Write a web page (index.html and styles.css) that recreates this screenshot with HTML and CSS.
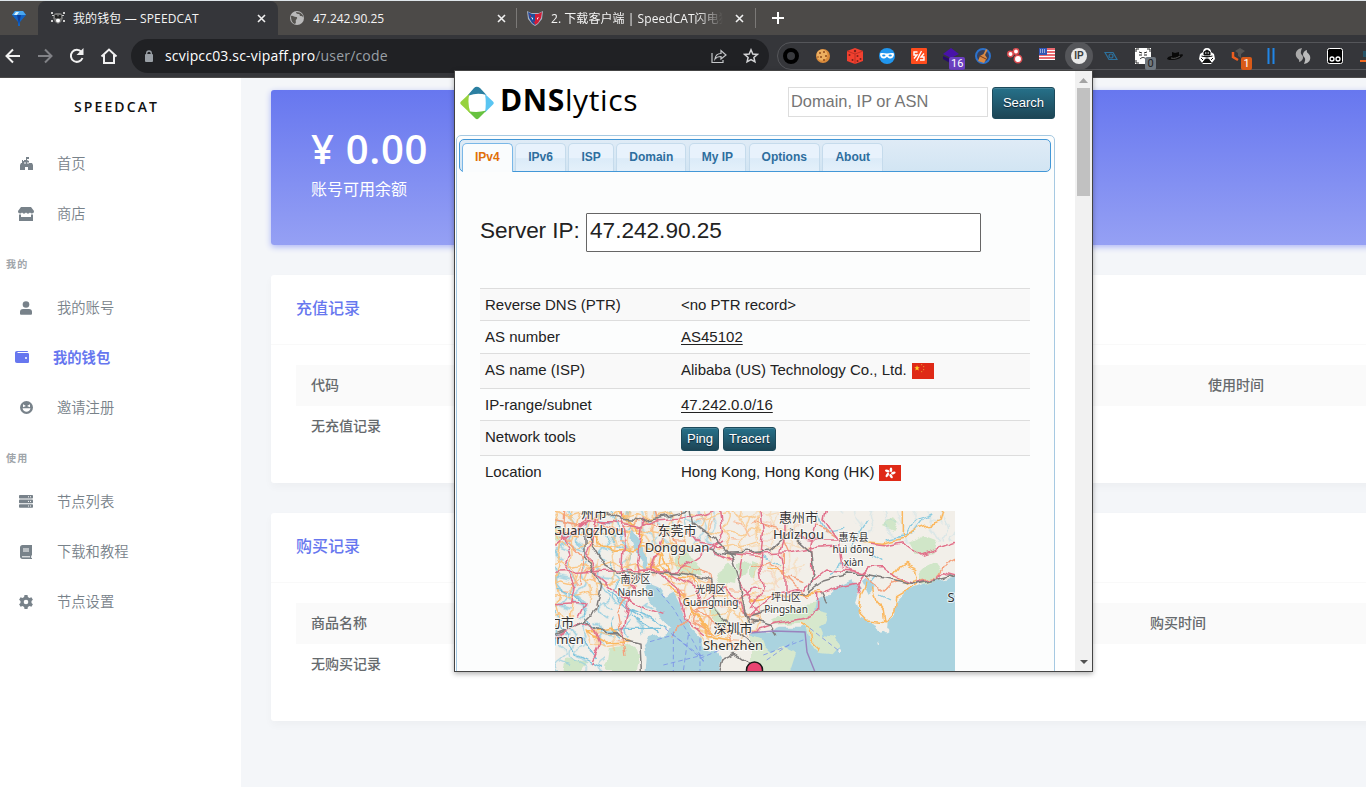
FILE: index.html
```html
<!DOCTYPE html>
<html lang="zh-CN">
<head>
<meta charset="utf-8">
<title>我的钱包 — SPEEDCAT</title>
<link rel="stylesheet" href="styles.css">
</head>
<body>
<div class="window">
  <header class="chrome">
    <div class="tabstrip">
      <div class="pinned"><svg width="14" height="16" viewBox="0 0 14 16"><path d="M3 1h8l3 4-6 7v4H6v-4L0 5z" fill="#1263c4"/><path d="M3 1h8l3 4H0z" fill="#49a6ef"/><path d="M4 2h3L5 5H2z" fill="#d9f3ff"/><path d="M5 5h4l-2 9z" fill="#0d3e9a"/></svg></div>
      <div class="tab tab-active">
        <svg width="16" height="16" viewBox="0 0 16 16"><path d="M4 4l2-1h4l2 1 1 4-2 4-3 2-3-2-2-4z" fill="#777"/><path d="M5 5h2l1 2 1-2h2v3l-3 1-3-1z" fill="#222"/><g fill="#ccc"><rect x="1" y="2" width="2" height="2"/><rect x="13" y="2" width="2" height="2"/><rect x="1" y="10" width="2" height="2"/><rect x="13" y="10" width="2" height="2"/><rect x="2" y="5" width="2" height="1"/><rect x="12" y="5" width="2" height="1"/><circle cx="8" cy="10.500" r="2" fill="#fff"/></g></svg>
        <span class="tab-title">我的钱包 — SPEEDCAT</span>
        <svg class="close" width="9" height="9" viewBox="0 0 9 9"><path d="M1 1l7 7M8 1L1 8"/></svg>
      </div>
      <div class="tab tab-ip">
        <svg width="14" height="14" viewBox="0 0 14 14"><circle cx="7" cy="7" r="7" fill="#b9b9b9"/><path d="M1 5c2-1 3 1 5 1s1 2 0 3 1 2-1 4C2 12 1 9 1 5zM6 1c0 2 2 2 3 2s0 2 2 2 2 1 2 2c1-3-2-6-7-6z" fill="#55534f"/></svg>
        <span class="tab-title">47.242.90.25</span>
        <svg class="close" width="9" height="9" viewBox="0 0 9 9"><path d="M1 1l7 7M8 1L1 8"/></svg>
      </div>
      <div class="tab tab-dl">
        <svg width="16" height="15" viewBox="0 0 16 15"><path d="M0 0l4 2h8l4-2-1 8-4 5-3 2-3-2-4-5z" fill="#aab2c4"/><path d="M1 1l4 2h3v11l-3-2-3-5z" fill="#204d9c"/><path d="M15 1l-4 2H8v11l3-2 3-5z" fill="#d31c36"/><path d="M4 6l2 1v2zM12 6l-2 1v2z" fill="#fff"/><path d="M2 3l2 2v2zM6 10l2 1v2z" fill="#d31c36"/></svg>
        <span class="tab-title fade">2. 下载客户端 | SpeedCAT闪电猫</span>
        <svg class="close" width="9" height="9" viewBox="0 0 9 9"><path d="M1 1l7 7M8 1L1 8"/></svg>
      </div>
      <svg class="newtab" width="12" height="12" viewBox="0 0 12 12"><path d="M6 0v12M0 6h12" stroke="#fff" stroke-width="2"/></svg>
    </div>
    <div class="toolbar">
      <nav class="nav">
        <svg width="16" height="16" viewBox="0 0 16 16" stroke="#f1f1f1"><path d="M15 8H2M8 1.5L1.5 8 8 14.5"/></svg>
        <svg width="16" height="16" viewBox="0 0 16 16" stroke="#818286"><path d="M1 8h13M8 1.500L14.500 8 8 14.500"/></svg>
        <svg width="16" height="16" viewBox="0 0 16 16" stroke="#f1f1f1"><path d="M13.500 10A6 6 0 1 1 12.500 4"/><path d="M14.500 0v7h-7z" fill="#f1f1f1" stroke="none"/></svg>
        <svg width="16" height="16" viewBox="1 0 16 16" stroke="#f1f1f1"><path d="M1.500 8.500L9 1.500l7.500 7M4 7v8h10V7"/></svg>
      </nav>
      <div class="omnibox">
        <svg width="10" height="13" viewBox="0 0 10 13"><rect x="1" y="4" width="8" height="8" rx="1" fill="#9aa0a6"/><path d="M2.700 5V3.300a2.300 2.300 0 0 1 4.600 0V5" fill="none" stroke="#9aa0a6" stroke-width="1.300"/></svg>
        <span class="url"><b>scvipcc03.sc-vipaff.pro</b>/user/code</span>
        <svg class="share" width="16" height="16" viewBox="0 0 16 16" fill="none" stroke="#c4c6c9" stroke-width="1.200"><path d="M1 5v9.500h11V12"/><path d="M4 11c.5-4 3-5.500 6-5.500V2.500L15 7l-5 4V8.500c-3 0-4.500.5-6 2.500z"/></svg>
        <svg width="16" height="16" viewBox="0 0 16 16" fill="none" stroke="#d3d4d6" stroke-width="1.500"><path d="M8 1.800l1.800 4.200 4.500.4-3.400 3 1 4.400L8 11.500l-3.900 2.300 1-4.400-3.400-3 4.500-.4z"/></svg>
      </div>
      <div class="exts">
        <span class="ext"><svg width="16" height="16" viewBox="0 0 16 16"><circle cx="8" cy="8" r="6" fill="#393a3e" stroke="#000" stroke-width="4"/></svg></span>
        <span class="ext"><svg width="16" height="16" viewBox="0 0 16 16"><circle cx="8" cy="8" r="7" fill="#d98a3a"/><circle cx="7" cy="7" r="5.500" fill="#edaf60"/><g fill="#8f4a1a"><circle cx="5" cy="5" r="1"/><circle cx="9" cy="4" r="1"/><circle cx="11" cy="8" r="1"/><circle cx="6" cy="9" r="1"/><circle cx="9" cy="12" r="1"/><circle cx="3" cy="9" r=".8"/></g></svg></span>
        <span class="ext"><svg width="16" height="16" viewBox="0 0 16 16"><path d="M8 0l8 3v10l-8 3-8-3V3z" fill="#f2402f"/><path d="M0 3l8 3 8-3M8 6v10" stroke="#a92a21" stroke-width=".7" fill="none"/><g fill="#7b211b"><circle cx="8" cy="3" r="1.200"/><circle cx="2.500" cy="7" r="1"/><circle cx="5.500" cy="12" r="1"/><circle cx="10.500" cy="8" r="1"/><circle cx="13.500" cy="11" r="1"/><circle cx="10.500" cy="13" r="1"/></g></svg></span>
        <span class="ext"><svg width="16" height="16" viewBox="0 0 16 16"><circle cx="8" cy="8" r="8" fill="#2196ee"/><path d="M1 5.500c3-1 5 0 7 0s4-1 7 0c0 4-2 5-4 5-2 0-2-1.500-3-1.500S7 10.500 5 10.500c-2 0-4-1-4-5z" fill="#fff"/><ellipse cx="4.800" cy="7.600" rx="1.700" ry="1" fill="#2196ee"/><ellipse cx="11.200" cy="7.600" rx="1.700" ry="1" fill="#2196ee"/></svg></span>
        <span class="ext"><svg width="16" height="16" viewBox="0 0 16 16"><rect width="16" height="16" rx="1" fill="#ff4c1d"/><path d="M6.500 4H3v3h3L3 10.500M10.500 3L5.500 13M9 12h4V9h-3l3-3.500" stroke="#fff" stroke-width="1.400" fill="none"/></svg></span>
        <span class="ext"><svg width="17" height="16" viewBox="0 0 17 16"><path d="M8 0l8 6-8 4-8-4z" fill="#4812a8"/><path d="M0 8l7 3v4l-7-4z" fill="#270a6c"/></svg><i class="badge violet">16</i></span>
        <span class="ext"><svg width="16" height="16" viewBox="0 0 16 16"><circle cx="8" cy="8" r="7" fill="#39405a" stroke="#2c72cc" stroke-width="2"/><path d="M11 1L8.500 6 5 8l-2 5 6 2 3-5-2-3 2.500-5z" fill="#dc8a43"/><path d="M5 8l6 3" stroke="#7a3b1c"/></svg></span>
        <span class="ext"><svg width="16" height="16" viewBox="0 0 16 16"><g fill="#fff" stroke="#dc4c50" stroke-width="1.500"><circle cx="3.500" cy="6" r="2.700"/><circle cx="9" cy="3.500" r="2.700"/><circle cx="11" cy="11" r="3.700"/></g></svg></span>
        <span class="ext flag-ext"><svg width="16" height="12" viewBox="0 0 16 12"><rect width="16" height="12" fill="#fff"/><path d="M0 1h16M0 4h16M0 7h16M0 10h16" stroke="#e23a42" stroke-width="1.500"/><rect width="8" height="7" fill="#3156b5"/><path d="M1 2h6M1 4h6" stroke="#fff" stroke-dasharray="1 1"/></svg></span>
        <span class="ext ip-on"><span class="ip">IP</span></span>
        <span class="ext"><svg width="14" height="12" viewBox="0 0 14 12" fill="none" stroke="#2d719d" stroke-width="1.200"><path d="M1 2.500h8l4 7H5zM1 2.500L3 6l2 3.500"/><circle cx="7" cy="6" r="2"/></svg></span>
        <span class="ext"><svg width="16" height="16" viewBox="0 0 16 16"><rect width="16" height="16" fill="#fff"/><path d="M1 4V1h3M12 1h3v3M1 12v3h3M4 4l3 1M12 4L9 5M4 7h3M9 7h3M5 11c2-2 4-2 6 0" stroke="#222" stroke-width="1" fill="none"/></svg><i class="badge gray">0</i></span>
        <span class="ext"><svg width="17" height="12" viewBox="0 0 17 12"><path d="M0 9c1-3 4-3 5-3l6-1c3-1 5-1 5 0s-4 5-10 5c-3 0-5 0-6-1z" fill="#0b0b0b"/><path d="M5 7V2l3 1 4-1v4z" fill="#080808"/><path d="M4 8c3 1 6 0 9-2" stroke="#555" fill="none"/></svg></span>
        <span class="ext"><svg width="16" height="16" viewBox="0 0 16 16"><path d="M8 0c3 0 4 2 4 4l3 2 1 5-4 5H4l-4-5 1-5 3-2c0-2 1-4 4-4z" fill="#fff"/><path d="M5 4l3-2 3 2v3H5zM2.500 8L8 9l5.500-1M3.500 15l3-4h3l3 4M2 10l2 2M14 10l-2 2" fill="#111" stroke="#111"/><circle cx="6.800" cy="5" r=".7" fill="#fff"/><circle cx="9.200" cy="5" r=".7" fill="#fff"/></svg></span>
        <span class="ext"><svg width="16" height="16" viewBox="0 0 16 16"><path d="M2 4v5l5 3" fill="none" stroke="#ee5d1e" stroke-width="2.500"/><path d="M4 3l5-3 5 3-4 3v4L7 8V5z" fill="#555"/></svg><i class="badge orange">1</i></span>
        <span class="ext"><svg width="8" height="16" viewBox="0 0 8 16"><path d="M1.500 0v16M6.500 0v16" stroke="#2185e6" stroke-width="2"/></svg></span>
        <span class="ext"><svg width="16" height="16" viewBox="0 0 16 16"><path d="M7 0C2 1 0 4 1 8c1 3 4 3 3 6 4-1 5-5 3-7S6 3 7 0z" fill="#aaa"/><path d="M9 16c5-1 7-4 6-8-1-3-4-3-3-6-4 1-5 5-3 7s1 4 0 7z" fill="#bbb"/></svg></span>
        <span class="ext"><svg width="16" height="16" viewBox="0 0 16 16"><rect x=".5" y=".5" width="15" height="15" rx="2" fill="#000" stroke="#fff"/><circle cx="5" cy="11" r="2" fill="none" stroke="#fff" stroke-width="1.300"/><circle cx="11" cy="11" r="2" fill="none" stroke="#fff" stroke-width="1.300"/></svg></span>
        <span class="ext"><svg width="14" height="14" viewBox="0 0 14 14"><path d="M3 2h7v6H3z" fill="#275367"/><path d="M0 12h14" stroke="#f4681e" stroke-width="2"/></svg></span>
      </div>
    </div>
  </header>

  <div class="page">
    <aside class="sidebar">
      <div class="brand">SPEEDCAT</div>
      <a class="item"><svg width="13" height="13" viewBox="0 0 13 13"><path d="M6 0h3v2H7v1l2 1v2h3l1 2v5H8v-3H5v3H0V8l1-2h1V3h1v1h1V3h2z"/><path d="M5 5v2M8 5v2" stroke="#fff"/></svg><span>首页</span></a>
      <a class="item"><svg width="16" height="14" viewBox="0 0 16 14"><path d="M3 0h10l3 4c0 3-3 3-4 1.500-1 1.500-3 1.500-4 0-1 1.500-3 1.500-4 0C3 7 0 7 0 4zM1 7.500h2V10h10V7.500h2V14H1z"/></svg><span>商店</span></a>
      <div class="menu-head">我的</div>
      <a class="item"><svg width="12" height="14" viewBox="0 0 12 14"><circle cx="6" cy="3.500" r="3.300"/><path d="M3 8h6c2 0 3 1.300 3 3v1.500c0 .8-.5 1.300-1.300 1.300H1.300C.5 13.800 0 13.300 0 12.500V11c0-1.700 1-3 3-3z"/></svg><span>我的账号</span></a>
      <a class="item active"><svg width="14" height="12" viewBox="0 0 14 12"><path d="M2 0h10c.7 0 1 .5 1 1H2.500v1H12.500c1 0 1.500.5 1.500 1.500v7c0 1-.5 1.500-1.500 1.500H2c-1.300 0-2-.7-2-2V2C0 .8.700 0 2 0z"/><circle cx="11" cy="7" r="1" fill="#fff"/></svg><span>我的钱包</span></a>
      <a class="item"><svg width="13" height="13" viewBox="0 0 13 13"><circle cx="6.500" cy="6.500" r="6.500"/><path d="M2.500 7.300h8c-.4 2-2 3.400-4 3.400s-3.600-1.400-4-3.400zM3 3.300L6 5 3 6.200zM10 3.300L7 5l3 1.200z" fill="#fff"/></svg><span>邀请注册</span></a>
      <div class="menu-head">使用</div>
      <a class="item"><svg width="14" height="13" viewBox="0 0 14 13"><rect width="14" height="3.600" rx=".8"/><rect y="4.600" width="14" height="3.600" rx=".8"/><rect y="9.200" width="14" height="3.600" rx=".8"/><path d="M9 1.800h3M9 6.400h3M9 11h3" stroke="#fff" stroke-dasharray="1 1"/></svg><span>节点列表</span></a>
      <a class="item"><svg width="12" height="14" viewBox="0 0 12 14"><path d="M2.500 0H12v10.500h-.8V13h.8v1H2.500C1 14 0 13 0 11.500v-9C0 1 1 0 2.500 0z"/><path d="M3 4h6M3 6h6M2 11.800h8" stroke="#fff" fill="none"/></svg><span>下载和教程</span></a>
      <a class="item"><svg width="14" height="14" viewBox="0 0 14 14"><path d="M5.500 0h3l.4 2 1.600.9 1.900-.7 1.500 2.600L12.500 6v2l1.400 1.200-1.500 2.600-1.900-.7-1.600.9-.4 2h-3l-.4-2-1.600-.9-1.900.7L.1 9.200 1.500 8V6L.1 4.800l1.500-2.600 1.900.7L5.100 2z"/><circle cx="7" cy="7" r="2.300" fill="#fff"/></svg><span>节点设置</span></a>
    </aside>
    <main class="main">
      <section class="hero"><h1>¥ 0.00</h1><p>账号可用余额</p></section>
      <section class="card">
        <h2>充值记录</h2>
        <div class="records"><div class="row head topup"><span>代码</span><span>使用时间</span></div><div class="row">无充值记录</div></div>
      </section>
      <section class="card">
        <h2>购买记录</h2>
        <div class="records"><div class="row head orders"><span>商品名称</span><span>购买时间</span></div><div class="row">无购买记录</div></div>
      </section>
    </main>
  </div>

  <div class="popup">
    <div class="pop-body">
      <div class="pop-top">
        <svg width="34" height="34" viewBox="0 0 34 34"><path d="M7.500 9.500L14 2Q16.500-.5 20 2L26.500 9Q17 6.500 9 9.500z" fill="#2b7fa1"/><path d="M25 8l8 7.500q1.500 1.500 0 3L25 26.500Q26.500 17 25 8z" fill="#5ac5f2"/><path d="M26.500 24.500L18.500 32.500q-1.500 1.500-3 0L8 25q9 2 18.500-.5z" fill="#67c240"/><path d="M9.500 7.500Q7 17 10.500 27.500L1 18.500q-1.500-1.500 0-3z" fill="#97d23d"/></svg>
        <div class="logo"><b>DNS</b>lytics</div>
        <div class="query">Domain, IP or ASN</div>
        <div class="btn search">Search</div>
      </div>
      <div class="panel">
        <div class="pop-tabs">
          <span class="t on">IPv4</span><span class="t">IPv6</span><span class="t">ISP</span><span class="t">Domain</span><span class="t">My IP</span><span class="t">Options</span><span class="t">About</span>
        </div>
        <div class="content">
          <div class="server"><span>Server IP:</span><div class="ipbox">47.242.90.25</div></div>
          <div class="info">
            <div class="line odd"><span>Reverse DNS (PTR)</span><span>&lt;no PTR record&gt;</span></div>
            <div class="line even"><span>AS number</span><u>AS45102</u></div>
            <div class="line odd tall"><span>AS name (ISP)</span><span>Alibaba (US) Technology Co., Ltd.</span><svg class="flag cn" width="22" height="16" viewBox="0 0 22 16"><rect width="22" height="16" fill="#df2a17"/><path d="M5 2.200l.8 2 2 .1-1.600 1.300.6 2L5 6.500 3.300 7.600l.6-2L2.300 4.300l2-.1z" fill="#ffd22b"/><g fill="#e9822b"><rect x="9" y="1" width="1.200" height="1.200"/><rect x="11" y="3" width="1.200" height="1.200"/><rect x="11" y="6" width="1.200" height="1.200"/><rect x="9" y="8" width="1.200" height="1.200"/></g></svg></div>
            <div class="line even short"><span>IP-range/subnet</span><u>47.242.0.0/16</u></div>
            <div class="line odd tall"><span>Network tools</span><span class="tools"><span class="btn small">Ping</span><span class="btn small">Tracert</span></span></div>
            <div class="line even"><span>Location</span><span>Hong Kong, Hong Kong (HK)</span><svg class="flag hk" width="22" height="16" viewBox="0 0 22 16"><rect width="22" height="16" fill="#df2a17"/><g fill="#fff" transform="translate(11 8)"><ellipse cx="1" cy="-3.200" rx="1.300" ry="2.400"/><ellipse cx="1" cy="-3.200" rx="1.300" ry="2.400" transform="rotate(72)"/><ellipse cx="1" cy="-3.200" rx="1.300" ry="2.400" transform="rotate(144)"/><ellipse cx="1" cy="-3.200" rx="1.300" ry="2.400" transform="rotate(216)"/><ellipse cx="1" cy="-3.200" rx="1.300" ry="2.400" transform="rotate(288)"/></g></svg></div>
          </div>
          <svg class="map" width="400" height="160" viewBox="0 0 400 160">
            <defs>
              <filter id="meander" x="-5%" y="-5%" width="110%" height="110%"><feTurbulence type="fractalNoise" baseFrequency=".07" numOctaves="2" seed="4" result="n"/><feDisplacementMap in="SourceGraphic" in2="n" scale="9" xChannelSelector="R" yChannelSelector="G"/></filter>
              <pattern id="streets" width="170" height="150" patternUnits="userSpaceOnUse"><g fill="none" stroke="#fbc480" stroke-width="4"><path d="M0 28L30 20 55 36 90 28 120 42 170 28M0 90l28-12 34 8 30-18 40 14 38 8M20 0l8 30-14 40 12 50-6 30M66 0l-6 36 16 30-12 40 2 44M118 0l2 42-14 32 18 30-6 46M0 126l40-8 20 12 56-18 54 14M90 28l-14 38M140 10l-8 60 14 50"/><path d="M40 50l24 6 20 40M94 52l26-10M150 40l-18 42M30 104l34 2" stroke="#f9b28a"/></g></pattern>
              <pattern id="streams" width="130" height="170" patternUnits="userSpaceOnUse"><path d="M4 10q20 14 14 36t20 40-8 40 10 44M60 0q-14 26 6 46t-2 44 22 40 4 40M110 6q-20 20-6 44t-16 38 20 44M18 46l40 8M76 100l26 22M30 130l30 12" fill="none" stroke="#8ccbe0" stroke-width="4"/></pattern>
            </defs>
            <rect width="400" height="160" fill="#f2efe9"/>
            <g filter="url(#meander)">
            <g transform="translate(-5 -6) scale(.33333)" stroke-linejoin="round">
              <g fill="#d0e6c8"><path d="M370 160l30-30 40 40 20 40-70 0zM495 205l40-30 25 20-5 45-50-10zM470 310l30-5 40 50-30 20zM180 430l50-10 40 30-10 48h-90zM350 60l30 5-5 20-25-5zM50 460l60 10-20 28H40zM560 180l40-5-5 30-30 5zM15 60l25 15-10 40H15z"/></g>
              <path d="M0 0H240V230L330 330 270 400H0z" fill="url(#streams)"/>
              <path d="M230 0H520V150H300zM0 400h165v120H0z" fill="url(#streams)" opacity=".7"/>
              <path d="M0 0H350L460 130 300 200 240 260 210 220 0 390z" fill="url(#streets)"/>
              <path d="M300 180l60-40 80 70 190 60v150l-130 20-60-50-50-110-80-60zM400 0h230v148l-100 20zM90 380l90-20 60 50-40 30-70-20z" fill="url(#streets)" opacity=".8"/>
              <path d="M240 75l22 10 8 30 18 35 10 35-16 5-22-40-14-40zM295 235l30 12 22 28 28-14 18 35 5 35 30 40 28 30 5 32 40 8 12 17-16 62H285l5-60-8-38 12-27 45-8 25-14-32-38-25-37-25-32z" fill="#aad3df"/>
              <path d="M250 80q8 55 38 110-14-30-26-60z" fill="none" stroke="#aad3df" stroke-width="6"/>
              <path d="M230 310l60 20 60 40M240 330l80 50M20 250q60 10 90 80t120 40h100M30 360l50 90 80 40M100 400l40 60M175 250l55 60 50 30" stroke="#7cc2dc" stroke-width="4" fill="none"/>
              <g fill="none" stroke="#f5a17b" stroke-width="4"><path d="M0 40l90 20 50-20 60 40 70-35 90 35M45 0l-5 98 60 60-10 90M310 0l30 98-30 90M360 210l40 60 40 50 90 60 30 60M365 400l70-90 100-10 90 35M420 210l30 80-20 60 60 40M225 450l-20-120 30-70M400 0l-30 88 20 90 90 30 10 60"/></g>
              <g fill="none" stroke="#fbb75d" stroke-width="5"><path d="M350 240l60 40 30 60 50 50 65-10M415 280l25 60 40 55 60 10M120 380l60-10 60 40-70 5-60-35zM200 18l80 70-10 40 70 20 20 50M0 85l125 5 60 50 100-10M300 180l50 30 70 10 60 40M340 110l-10 70 20 20"/></g>
              <g fill="none" stroke="#e2718b" stroke-width="4.500"><path d="M10 130l100-80 80 0 80 15 50-20 120-10 70-25M0 90l75-5 45-65M40 90l20 60-15 40 30 60-10 50M145 0l-20 98-15 50 30 60 70 60 60 35 70 25M210 0l15 108-10 100 35 40-20 70-15 80M0 205l115-5 180-5 80 5 90-60 60-35M280 40l-20 130 15 50M335 110l-30 80 80 60 20 90 60 50M365 205l70 45 20 50 70-55 40 40 30 50 35-10M510 0l10 88-30 50 60 30M540 145l90 10M0 405l75-45 50-5 25 60-25 60M0 300l105-5-20 40M420 75l30 40 70 10M555 300l50-50 25 0M575 165l-10 60 60 100"/></g>
              <g fill="none" stroke="#817e7d" stroke-width="4.500"><path d="M0 394l100-41 40-40 15-75-50-80 0-75 60 100 40 22 170-3 110 22 15 90 55 60 40 30 15 50 40 60M150 10l65 33 60 5 140-30M420 0l10 53 85 65 30 40 25 80 10 60 20 60 25-10M105 348l60 35 40 0 25 25 40 10 5 100M530 145l100-5M505 500l10-35 40-20 75 50M475 135l80 15"/></g>
            </g>
            <g transform="translate(195 -6) scale(.33333)" stroke-linejoin="round">
              <g fill="#d0e6c8"><path d="M480 110l40-20 40 15-10 40-50 5zM515 190l40-20 20 25-20 35-40 10zM70 340l90-40 40-5-10 55-120 10zM395 60l30-20 20 10-15 25zM0 165l25 10-5 40H0z"/></g>
              <path d="M0 0H150L190 150 60 300 0 280z" fill="url(#streets)" opacity=".4"/>
              <path d="M240 0h390v110H400z" fill="url(#streams)" opacity=".25"/>
              <path d="M650 215l-90 10-50 18-40 15-30 30-5 42-22 18-2 34-20 4-14-30-47-20-15-45 15-45-25-20-45 20-25 25-40 20-5 30 10 19-30 15-20 10-60 0-30 12-60 5v170h650z" fill="#aad3df"/>
              <g fill="#d7e8cd"><path d="M150 350l35-20 20-10 32 8-10 25-20 12 10 25 35 5 15 25-25 28-35-5-25-35zM0 388l30 10 10 25 20 20 40-18 38 20-10 30-15 45H30l-30-20z"/><path d="M330 225l12-10 18 10 18 15-5 18-20 12-12-25z" fill="#aad3df"/></g>
              <g fill="#f2efe9"><circle cx="265" cy="438" r="6"/><circle cx="380" cy="411" r="4"/><circle cx="410" cy="380" r="8"/></g>
              <g fill="none" stroke="#8ccbe0" stroke-width="4"><path d="M200 20l30 60 50-10M350 50l-30 50-20 30M470 90l20-40 60-20M370 150l30 20M410 105l80-20 30-40M240 210l30-30 30 10M360 235l20-25M390 270l30 15M30 150l60 30"/></g>
              <g fill="none" stroke="#fbb75d" stroke-width="4.500"><path d="M340 110l60 5 60-15 50-30 60-20 10-40M460 0l0 100M430 210l15-20 20-12 35 15 5 35-30 8zM500 240l-60 35-5 45-25 30-60-5-25-25 5-50 10-20 10-25M370 250l10 40 20 25 5 35M160 270l55-8M150 355l30 20 5 30 25 25-5 10M50 190l60 15M0 285l60-10 90-5 60-15"/></g>
              <g fill="none" stroke="#f5a17b" stroke-width="4"><path d="M0 185l60-15 40 40 60 20M100 145l0 60 70 70M200 0v58l60 40M340 205l30 30 30 20 20-20 30-10M560 225l25-50 50-25M15 50l70 20 30 70M510 230l40-10"/></g>
              <g fill="none" stroke="#e2718b" stroke-width="4.500"><path d="M0 145l120-5 60-12 80-5M90 145l15-50 0-95M235 0l-10 48 40 60 10 80 60 15 20-18 45 0 40 30 50 20M360 115l50 5 50-10 55 40 120-43M140 95l60 10 70 0M0 330l70-60 90-20 70-55 110 8M200 50l-15 70 0 90M0 380l75-25 90-15 35-20 0-60M210 265l60-20 50-10 10-20 20-25M320 230l8 35M30 0l10 78-10 90 10 80-40 60M90 145l15 60 0 70M500 235l55-12 25-20 55 14"/></g>
              <g fill="none" stroke="#817e7d" stroke-width="4.500"><path d="M0 140l60-5 70-60M120 70l20 30 45 40 5 60-10 50M0 335l65-20M120 268l50-5 50-35 70-20 60 0 150 30 100-25 40 14M215 265l15 30M0 345l60 15 20 30"/></g>
            </g>
            </g>
            <g transform="translate(-5 -6) scale(.33333)" fill="none" stroke="#7992e8" stroke-width="2.500" stroke-dasharray="14 9"><path d="M320 250l50 60 60 100 30 60M345 370l120 100M370 380v118M415 390l-15 108M450 400v98M300 410l70-20 90 70M340 480l120-30M450 460l60-25M650 465l80-55M640 450l120-45M780 370l90 70"/></g>
            <path d="M195 122l23-2 32 1 2 20 8 20" fill="none" stroke="#9a83bd" stroke-width="1.400"/>
            <circle cx="199.500" cy="159" r="8" fill="#e94471" stroke="#191919" stroke-width="1.500"/>
            <g class="place">
              <text class="z" x="39" y="7">州市</text><text x="33" y="24">Guangzhou</text>
              <text class="z" x="122" y="24">东莞市</text><text x="122" y="41">Dongguan</text>
              <text class="z" x="243.500" y="11">惠州市</text><text x="243.500" y="28">Huizhou</text>
              <text class="z" x="178" y="122">深圳市</text><text x="178" y="139">Shenzhen</text>
              <text class="z" x="6" y="116">力市</text><text x="11" y="133">gmen</text><text x="396" y="91">S</text>
              <g class="minor"><text class="z" x="80.500" y="72">南沙区</text><text x="80.500" y="85">Nansha</text><text class="z" x="155.500" y="82">光明区</text><text x="155.500" y="95">Guangming</text><text class="z" x="231" y="90">坪山区</text><text x="231" y="102">Pingshan</text><text class="z" x="298.500" y="30">惠东县</text><text x="298.500" y="42">huì dōng</text><text x="298.500" y="55">xiàn</text></g>
            </g>
          </svg>
        </div>
      </div>
    </div>
    <div class="scroll"><svg width="9" height="5" viewBox="0 0 9 5"><path d="M4.500 0L9 5H0z" fill="#a3a3a3"/></svg><div class="thumb"></div><svg class="down" width="8" height="4" viewBox="0 0 8 4"><path d="M0 0h8L4 4z" fill="#505050"/></svg></div>
  </div>
</div>
</body>
</html>
```
FILE: styles.css
```css
* { box-sizing: border-box; margin: 0; padding: 0; }
body { width: 1366px; height: 787px; overflow: hidden; font-family: "Open Sans", "Noto Sans CJK SC", sans-serif; }
svg { display: block; flex: none; }
.window { position: relative; width: 1366px; height: 787px; overflow: hidden; display: flex; flex-direction: column; }

.chrome { flex: none; height: 78px; border-bottom: 1px solid #4b4a4a; background: #35363a; }
.tabstrip { height: 35px; border-top: 1px solid #dfe6ea; background: #4c4a48; display: flex; align-items: center; }
.pinned { width: 38px; padding-left: 12px; }
.tab { height: 34px; display: flex; align-items: center; color: #f4f4f4; font-size: 12px; white-space: nowrap; }
.tab-title { flex: 1; margin-left: 8px; overflow: hidden; }
.tab-active { width: 240px; background: #35363a; border-radius: 8px 8px 0 0; padding: 0 12px; }
.tab-active .tab-title { letter-spacing: .12px; margin-left: 7px; }
.tab-ip { width: 239px; padding: 0 11px 0 12px; }
.tab-ip .tab-title { margin-left: 9px; }
.tab-dl { width: 239px; padding: 0 11px 0 10px; position: relative; }
.tab-dl::before, .tab-dl::after { content: ""; position: absolute; top: 7px; width: 1px; height: 20px; background: #7b7977; }
.tab-dl::before { left: -1px; }
.tab-dl::after { right: 0; }
.tab-dl .tab-title { letter-spacing: .06px; }
.tab .fade { flex: none; width: 172px; margin-right: 12px; -webkit-mask-image: linear-gradient(90deg, #000 85%, transparent); mask-image: linear-gradient(90deg, #000 85%, transparent); }
.close { stroke: #f0f0f0; stroke-width: 1.6; }
.newtab { margin-left: 16px; }

.toolbar { height: 42px; display: flex; align-items: center; }
.nav { width: 131px; display: flex; align-items: center; gap: 16px; padding-left: 5px; }
.nav svg { fill: none; stroke-width: 2; overflow: visible; }
.omnibox { width: 638px; height: 34px; border-radius: 17px; background: #202124; display: flex; align-items: center; padding: 0 10px 0 13px; }
.url { flex: 1; margin-left: 11px; margin-top: -2px; font-size: 14px; letter-spacing: .18px; color: #9aa0a6; white-space: nowrap; }
.url b { font-weight: 400; color: #fff; }
.share { margin-right: 16px; }
.exts { margin-left: 8px; width: 620px; flex: none; height: 28px; border: 1px solid #55565a; border-radius: 14px; display: flex; align-items: center; margin-right: -40px; }
.ext { position: relative; flex: none; width: 32px; height: 26px; display: flex; align-items: center; justify-content: center; }
.ext:first-child { margin-left: -3px; }
.flag-ext { padding-bottom: 5px; }
.badge { position: absolute; left: 15px; top: 14px; min-width: 11px; height: 13px; border-radius: 2px; padding: 0 2px; font: 11px/13px Roboto, sans-serif; color: #fff; text-align: center; }
.badge.violet { background: #6b3fc0; left: 14px; width: 16px; }
.badge.gray { background: #707880; color: #222; left: 18px; }
.badge.orange { background: #d95a18; left: 18px; }
.ip-on::before { content: ""; position: absolute; width: 28px; height: 28px; border-radius: 50%; background: #55565a; }
.ip { position: relative; width: 16px; height: 16px; border-radius: 50%; background: #e9e9e9; color: #3d3d3d; font: bold 10px/16px "Liberation Sans", sans-serif; text-align: center; }

.page { flex: 1; display: flex; background: #f4f6f9; }
.sidebar { width: 241px; flex: none; background: #fff; }
.brand { height: 61px; line-height: 57px; padding-left: 74px; font-size: 14px; font-weight: 600; letter-spacing: 2.1px; color: #111; white-space: nowrap; }
.item { height: 50px; display: grid; grid-template-columns: 52px 1fr; align-items: center; color: #78828a; font-size: 14.3px; }
.item svg { justify-self: center; fill: #78828a; margin-top: -1px; }
.item span { padding-left: 5px; margin-top: -3px; font-weight: 350; }
.item.active { color: #6777ef; margin-left: -4px; }
.item.active svg { fill: #6777ef; margin-top: -2px; }
.item.active span { font-weight: 700; }
.menu-head { height: 44px; line-height: 50px; padding-left: 6px; font-size: 10px; font-weight: 700; letter-spacing: 1.2px; color: #a0a5aa; }
.main { flex: 1; padding: 12px 0 0 30px; overflow: hidden; }
.hero { width: 1120px; height: 155px; border-radius: 3px; background: linear-gradient(#6777ef, #95a0f4); box-shadow: 0 2px 6px #acb5f6; color: #fff; padding: 30px 40px; }
.hero h1 { font-size: 40px; line-height: 57px; font-weight: 600; letter-spacing: .7px; }
.hero p { font-size: 16px; line-height: 24px; font-weight: 400; }
.card { width: 1120px; height: 208px; margin-top: 30px; background: #fff; border-radius: 3px; box-shadow: 0 4px 8px rgba(0,0,0,.03); }
.card h2 { height: 70px; border-bottom: 1px solid #f9f9f9; padding-left: 25px; font-size: 16px; line-height: 66px; font-weight: 500; color: #6777ef; }
.records { padding: 20px 25px; }
.row { height: 41px; line-height: 40px; padding-left: 15px; font-size: 14px; font-weight: 500; color: #666a6d; }
.row.head { display: grid; background: #fafafa; }
.topup { grid-template-columns: 897px 1fr; }
.orders { grid-template-columns: 839px 1fr; }

.popup { position: absolute; left: 454px; top: 70px; width: 639px; height: 602px; display: flex; background: #fff; border: 1px solid #444; box-shadow: 0 2px 5px rgba(0,0,0,.3); font-family: "Liberation Sans", Arial, sans-serif; color: #222; overflow: hidden; }
.pop-body { width: 620px; flex: none; overflow: hidden; }
.pop-top { display: flex; height: 64px; padding: 15px 0 0 5px; width: 600px; align-items: flex-start; }
.logo { font: 30px/34px "Open Sans", sans-serif; letter-spacing: .6px; width: 287px; margin: -3px 0 0 6px; color: #000; white-space: nowrap; }
.query { width: 200px; height: 30px; border: 1px solid #ddd; margin: 1px 4px 0 1px; padding-left: 2px; font-size: 16.4px; line-height: 27px; color: #757575; white-space: nowrap; }
.btn { background: linear-gradient(#26718a, #1d4555); border: 1px solid #1d4a5b; border-radius: 3px; color: #fff; text-align: center; box-shadow: inset 0 1px 0 #438298; text-shadow: 0 1px 1px #123; }
.search { flex: none; width: 63px; height: 32px; margin-top: 1px; font-size: 13px; line-height: 29px; }
.panel { width: 599px; height: 700px; margin-left: 1px; border: 1px solid #a6c9e2; border-radius: 5px; padding: 3px 3px; background: #fcfdfd; }
.pop-tabs { margin-left: -1px; width: 592px; height: 33px; border: 1px solid #4297d7; border-radius: 5px; background: linear-gradient(#dfebf6, #d2e5f3); padding: 3px 0 0 2px; display: flex; gap: 2.5px; }
.t { height: 28px; border: 1px solid #c5dbec; border-bottom: 0; border-radius: 5px 5px 0 0; padding: 0 12px; font-size: 12px; font-weight: 700; line-height: 27px; color: #2e6e9e; background: linear-gradient(#e8f2fc 0 52%, #dbebf8 54%, #e4f0fa); white-space: nowrap; }
.t.on { height: 29px; color: #e17009; border-color: #79b7e7; background: #fafcfd; }
.content { padding: 41px 0 0 20px; }
.server { display: flex; font-size: 22.6px; line-height: 36px; white-space: nowrap; }
.server span { width: 106px; letter-spacing: -.08px; }
.ipbox { width: 395px; height: 39px; border: 1px solid #666; border-radius: 1px; background: #fff; padding-left: 3px; line-height: 34px; }
.info { width: 550px; margin-top: 36px; }
.line { height: 33px; border-top: 1px solid #ddd; display: grid; grid-template-columns: 196px max-content 1fr; padding: 6px 5px 0; font-size: 15px; line-height: 20px; }
.line:first-child { height: 32px; }
.line.odd { background: #f9f9f9; }
.line.tall { height: 35px; }
.line.short { height: 32px; }
.line u { text-underline-offset: 2px; }
.flag { margin: 3px 0 0 5px; }
.tools { display: flex; gap: 4px; }
.small { height: 24px; font-size: 13px; line-height: 22px; padding: 0 5px; }
.map { margin: 23px 0 0 75px; overflow: hidden; }
.place { font: 13px "Noto Sans", "Noto Sans CJK SC", sans-serif; fill: #333; text-anchor: middle; paint-order: stroke; stroke: #fff; stroke-opacity: .7; stroke-width: 2px; }
.minor { font-size: 10px; }
.scroll { width: 17px; background: #f1f1f1; display: flex; flex-direction: column; align-items: center; padding-top: 7px; }
.thumb { width: 13px; height: 108px; background: #c1c1c1; margin-top: 5px; }
.down { margin-top: auto; margin-bottom: 7px; }
```
